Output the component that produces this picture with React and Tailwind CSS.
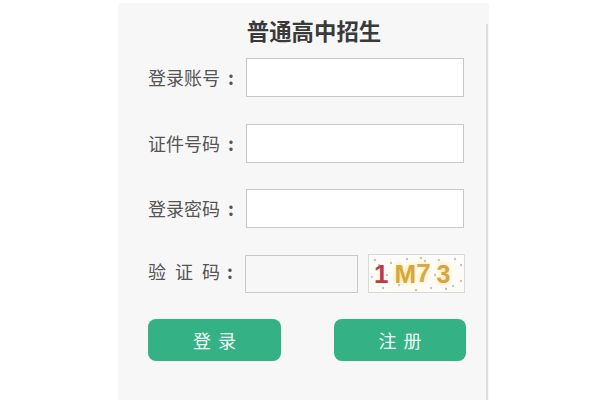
import React from "react";

const font = "font-['Noto_Sans_CJK_SC',sans-serif]";

const rows = [
  { label: "登录账号", top: "mt-[14px]" },
  { label: "证件号码", top: "mt-[27px]" },
  { label: "登录密码", top: "mt-[26px]" },
];

const dots = [
  [6, 5, "#c9c9a8"], [14, 33, "#b9c2cc"], [22, 8, "#d8c48a"], [30, 30, "#c7c7c7"],
  [38, 4, "#b9c2cc"], [47, 35, "#d8c48a"], [56, 6, "#b9c2cc"], [62, 33, "#c7c7c7"],
  [70, 5, "#c9c9a8"], [77, 34, "#b9c2cc"], [86, 4, "#c7c7c7"], [92, 10, "#b9c2cc"],
  [92, 26, "#d8c48a"], [3, 22, "#c7c7c7"], [18, 20, "#d8c48a"], [66, 20, "#c9c9a8"],
  [10, 10, "#b9c2cc"], [33, 12, "#d8c48a"], [84, 31, "#c7c7c7"], [52, 3, "#d8c48a"],
];

const Captcha = () => (
  <div className="relative ml-[10px] flex h-[39px] w-[97px] items-center overflow-hidden border border-[#d9d9d9] bg-[#fdfcf8] pt-[1px] font-['Liberation_Sans',sans-serif] font-bold [text-shadow:0_0_5px_#fde68a]">
    <svg className="absolute inset-0" width="97" height="39" aria-hidden="true">
      {dots.map(([x, y, fill]) => (
        <circle key={`${x}-${y}`} cx={x} cy={y} r="1.2" fill={fill} />
      ))}
    </svg>
    <span className="relative ml-[5px] text-[26px] leading-none text-[#c23a3f] [text-shadow:none]">1</span>
    <span className="relative ml-[6px] text-[26px] leading-none text-[#d9a63a]">M</span>
    <span className="relative mb-[2px] text-[26px] leading-none text-[#d6a94a]">7</span>
    <span className="relative ml-[6px] text-[25px] leading-none text-[#d9a244]">3</span>
  </div>
);

export default function App() {
  return (
    <div className={`flex h-[400px] w-[600px] overflow-hidden bg-white ${font}`}>
      <div className="ml-[118px] mt-[3px] flex h-[397px] w-[371px] bg-[#f7f7f7]">
        <div className="w-[368px] pl-[30px]">
          <h1 className="mt-[13px] h-[28px] w-[332px] text-center text-[22.4px] font-bold leading-[28px] text-[#3a3a3a]">
            普通高中招生
          </h1>
          {rows.map((row) => (
            <div key={row.label} className={`flex h-[39px] items-center ${row.top}`}>
              <div className="flex w-[98px] pb-[1px] text-[18px] leading-none text-[#555555]">
                <span>{row.label}</span>
                <span className="ml-[8px] font-bold">:</span>
              </div>
              <div className="h-[39px] w-[218px] border border-[#c9c9c9] bg-white" />
            </div>
          ))}
          <div className="mt-[26px] flex h-[39px] items-center">
            <div className="flex w-[97px] pb-[5px] text-[18px] leading-none text-[#555555]">
              <span className="flex gap-[9px]">
                <span>验</span>
                <span>证</span>
                <span>码</span>
              </span>
              <span className="ml-[7px] font-bold">:</span>
            </div>
            <div className="h-[38px] w-[113px] border border-[#c9c9c9] bg-[#f7f7f7]" />
            <Captcha />
          </div>
          <div className="mt-[26px] flex w-[318px] justify-between">
            <button className="h-[42px] w-[133px] rounded-lg bg-[#34b285] pl-[7px] text-[18px] tracking-[7px] text-[#eefaf5]">
              登录
            </button>
            <button className="h-[42px] w-[132px] rounded-lg bg-[#34b285] pl-[7px] text-[18px] tracking-[7px] text-[#eefaf5]">
              注册
            </button>
          </div>
        </div>
        <div className="mt-[21px] w-[2px] bg-[#dddddd]" />
      </div>
    </div>
  );
}
